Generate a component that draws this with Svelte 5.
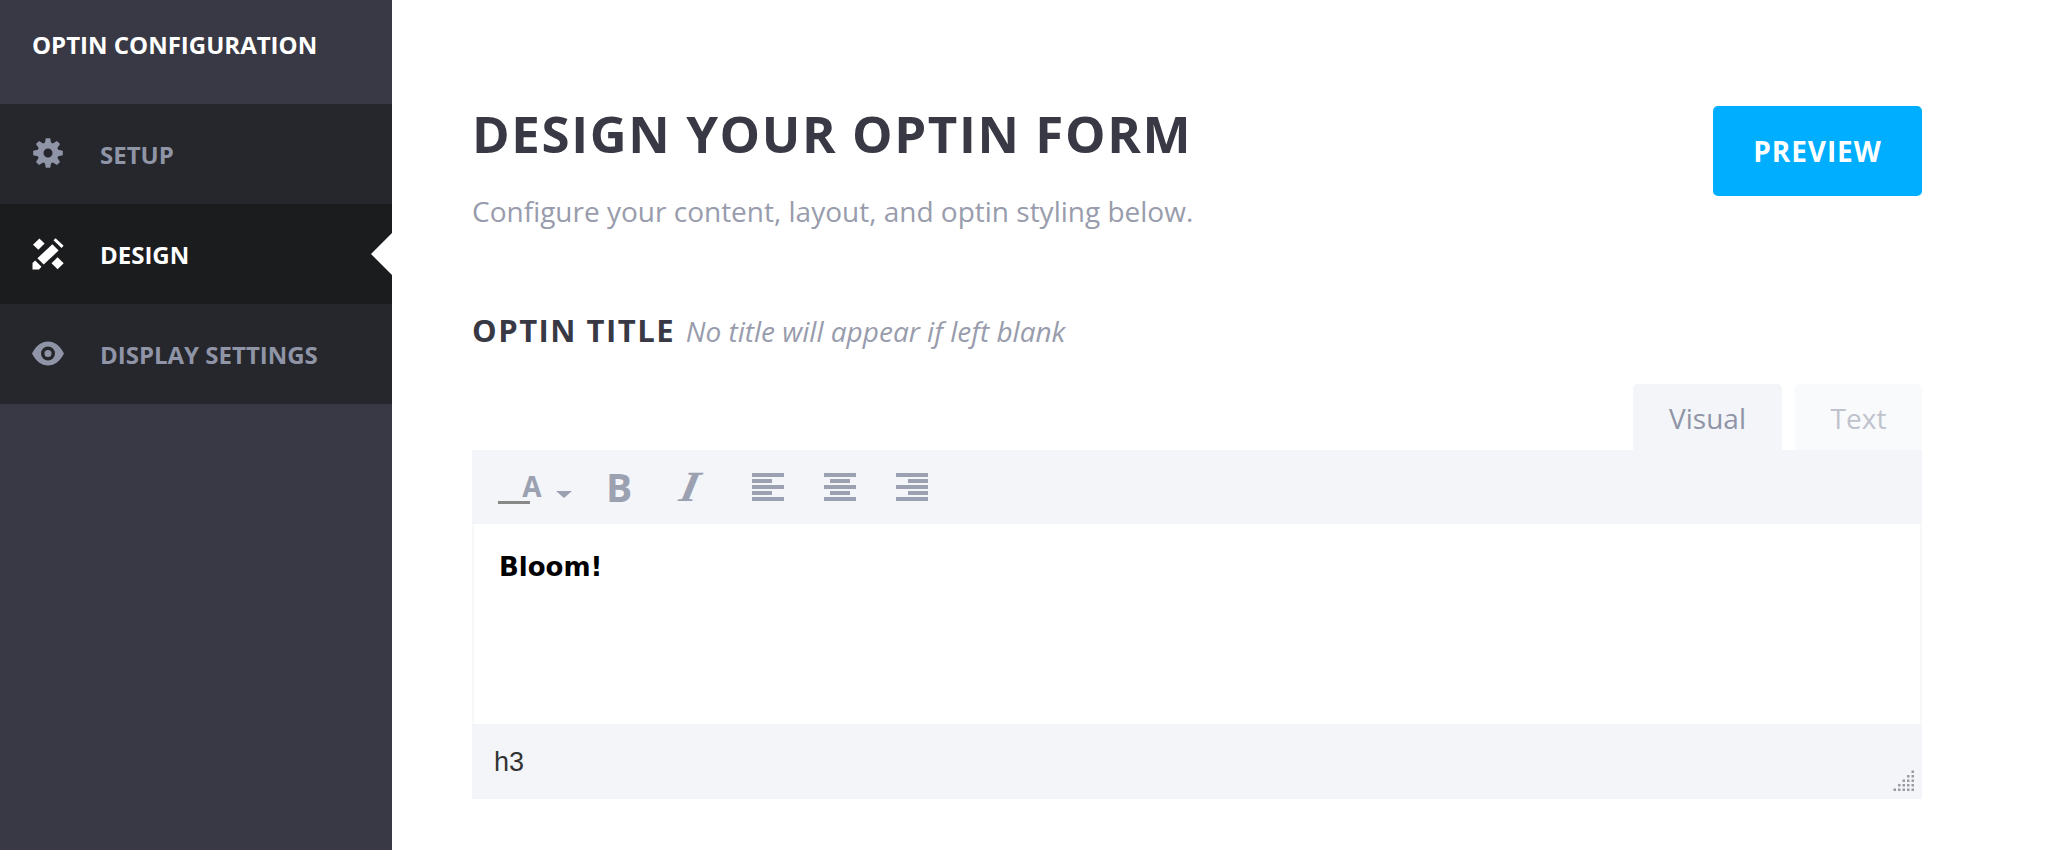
<script>
  const nav = [
    { label: 'SETUP', icon: 'gear' },
    { label: 'DESIGN', icon: 'pencil', active: true },
    { label: 'DISPLAY SETTINGS', icon: 'eye' }
  ];
  const gearPath = (() => {
    const cx = 15, cy = 15, teeth = 8;
    let d = '';
    for (let i = 0; i < teeth; i++) {
      const a = (i / teeth) * Math.PI * 2 - Math.PI / 2;
      const pts = [
        [10.6, a - 0.3], [15, a - 0.15], [15, a + 0.15], [10.6, a + 0.3]
      ];
      for (const [r, t] of pts) {
        d += (d ? 'L' : 'M') + (cx + r * Math.cos(t)).toFixed(2) + ' ' + (cy + r * Math.sin(t)).toFixed(2);
      }
    }
    return d + 'Z';
  })();
  const dots = [];
  for (let row = 0; row < 5; row++) {
    for (let col = 4 - row; col < 5; col++) dots.push([col * 4.5 + 0.5, row * 4.5 + 0.5]);
  }
</script>

<div class="page">
  <aside class="sidebar">
    <div class="side-title">OPTIN CONFIGURATION</div>
    <nav class="nav">
      {#each nav as item}
        <div class="nav-item" class:active={item.active}>
          <span class="nav-icon">
            {#if item.icon === 'gear'}
              <svg width="32" height="32" viewBox="-1 0 32 32"><path fill="currentColor" fill-rule="evenodd" d="{gearPath} M15 10.500a4.500 4.500 0 1 0 0 9a4.500 4.500 0 1 0 0-9Z" /></svg>
            {:else if item.icon === 'pencil'}
              <svg width="32" height="32" viewBox="0 0 32 32" fill="currentColor">
                <path d="M0.5 31.5V25L3.2 22.4L9.5 28.7L7 31.5Z" />
                <path d="M5.4 20.2L20.4 6.3L26.6 12.6L11.7 26.5Z" />
                <path d="M1 6.8L7.4 0.5L12.6 5.6L6.4 11.8Z" />
                <path d="M21.5 2.3L23.6 0.3L31.6 7.8L29.5 10.1Z" />
                <path d="M19.5 25.3L25.6 19.2L31.7 25.2L25.6 31.2Z" />
              </svg>
            {:else}
              <svg width="32" height="32" viewBox="0 0 32 32"><path fill="currentColor" fill-rule="evenodd" d="M0 15.500C4 7.500 9.500 3.500 16 3.500S28 7.500 32 15.500C28 23.500 22.500 27.500 16 27.500S4 23.500 0 15.500ZM16 8.500a7 7 0 1 0 0 14a7 7 0 1 0 0-14ZM16 12a3.500 3.500 0 1 1 0 7a3.500 3.500 0 1 1 0-7Z" /></svg>
            {/if}
          </span>
          <span class="nav-label">{item.label}</span>
        </div>
      {/each}
    </nav>
  </aside>

  <main class="main">
    <header class="head">
      <div>
        <h1>DESIGN YOUR OPTIN FORM</h1>
        <p class="sub">Configure your content, layout, and optin styling below.</p>
      </div>
      <button class="preview">PREVIEW</button>
    </header>

    <h2 class="section"><span class="section-title">OPTIN TITLE</span> <em>No title will appear if left blank</em></h2>

    <div class="tabs">
      <div class="tab on">Visual</div>
      <div class="tab off">Text</div>
    </div>

    <div class="editor">
      <div class="toolbar">
        <span class="tool color">
          <svg width="76" height="48" viewBox="0 -6 76 48">
            <rect x="0" y="32" width="32" height="3" fill="#888" />
            <text x="34" y="28" class="a-glyph" text-anchor="middle">A</text>
            <path d="M58 22H74L66 29Z" fill="#9ba1b0" />
          </svg>
        </span>
        <span class="tool glyph bold">B</span>
        <span class="tool glyph ital">I</span>
        {#each ['l', 'c', 'r'] as a}
          <svg class="align" width="32" height="28" viewBox="0 0 32 28" fill="#9ba1b0">
            <rect x="0" y="0" width="32" height="4" />
            <rect x={a === 'l' ? 0 : a === 'c' ? 6 : 12} y="6" width="20" height="4" />
            <rect x="0" y="12" width="32" height="4" />
            <rect x={a === 'l' ? 0 : a === 'c' ? 6 : 12} y="18" width="20" height="4" />
            <rect x="0" y="24" width="32" height="4" />
          </svg>
        {/each}
      </div>
      <div class="content"><strong>Bloom!</strong></div>
      <div class="status">
        <span>h3</span>
        <svg class="grip" width="22" height="22" viewBox="0 0 22 22" fill="#9a9aa2">
          {#each dots as [x, y]}<rect {x} {y} width="2.500" height="2.500" />{/each}
        </svg>
      </div>
    </div>
  </main>
</div>

<style>
  :global(body) { margin: 0; background: #fff; }
  .page {
    display: flex;
    width: 2054px;
    height: 850px;
    overflow: hidden;
    font-family: "Open Sans", sans-serif;
  }
  .sidebar {
    width: 392px;
    flex: none;
    background: #383944;
  }
  .side-title {
    height: 104px;
    box-sizing: border-box;
    padding: 30px 0 0 32px;
    color: #fff;
    font-size: 24px;
    font-weight: 700;
    line-height: 30px;
  }
  .nav-item {
    position: relative;
    height: 100px;
    display: flex;
    align-items: center;
    padding-left: 32px;
    background: #26272c;
    color: #8f94a6;
    font-size: 24px;
    font-weight: 700;
  }
  .nav-item.active {
    background: #1b1c1e;
    color: #fff;
  }
  .nav-item.active::after {
    content: '';
    position: absolute;
    right: 0;
    top: 29px;
    border-style: solid;
    border-width: 21px 21px 21px 0;
    border-color: transparent #fff transparent transparent;
  }
  .nav-icon {
    width: 32px;
    height: 32px;
    display: block;
    margin-right: 36px;
  }
  .nav-icon svg { display: block; }

  .main {
    width: 1450px;
    margin-left: 80px;
    flex: none;
  }
  .head {
    display: flex;
    justify-content: space-between;
    align-items: flex-start;
    padding-top: 106px;
  }
  h1 {
    margin: -5px 0 0;
    color: #383944;
    font-size: 51px;
    line-height: 64px;
    font-weight: 700;
    letter-spacing: 1.600px;
  }
  .sub {
    margin: 27px 0 0;
    color: #989cac;
    font-size: 28px;
    line-height: 38px;
    font-weight: 400;
  }
  .preview {
    width: 209px;
    height: 90px;
    border: 0;
    border-radius: 5px;
    background: #00aeff;
    color: #fff;
    font-family: inherit;
    font-size: 28px;
    font-weight: 700;
    letter-spacing: 0.900px;
    padding: 0;
  }
  .section {
    margin: 78px 0 0;
    font-size: 31px;
    line-height: 44px;
    font-weight: 700;
    letter-spacing: 1.500px;
    color: #383944;
  }
  .section em {
    font-size: 28px;
    font-weight: 400;
    letter-spacing: 0;
    color: #989cac;
    margin-left: 1px;
  }
  .tabs {
    display: flex;
    justify-content: flex-end;
    gap: 13px;
    margin-top: 31px;
  }
  .tab {
    height: 66px;
    box-sizing: border-box;
    display: flex;
    align-items: center;
    justify-content: center;
    border-radius: 5px 5px 0 0;
    font-size: 28px;
    padding-top: 2px;
  }
  .tab.on { width: 149px; background: #f4f5f8; color: #8f94a6; }
  .tab.off { width: 127px; background: #f9fafc; color: #c0c3cd; }

  .editor {
    border-right: 2px solid #f7f8fa;
    border-left: 2px solid #f7f8fa;
  }
  .toolbar {
    height: 74px;
    background: #f4f5f8;
    margin: 0 -2px;
    display: flex;
    align-items: center;
    padding-left: 26px;
    box-sizing: border-box;
  }
  .tool { display: block; }
  .color { height: 48px; margin-right: 32px; }
  .color svg { display: block; }
  .a-glyph {
    font-family: "Open Sans", sans-serif;
    font-weight: 700;
    font-size: 28px;
    fill: #9ba1b0;
  }
  .glyph {
    width: 24px;
    text-align: center;
    line-height: 40px;
    color: #9ba1b0;
  }
  .bold {
    font-family: "Open Sans", sans-serif;
    font-weight: 700;
    font-size: 39px;
    margin-right: 48px;
  }
  .ital {
    font-family: "Liberation Serif", serif;
    font-style: italic;
    font-weight: 700;
    font-size: 43px;
    margin-right: 50px;
    transform: skewX(-12deg) scaleX(1.1);
  }
  .align { margin-right: 40px; display: block; }
  .content {
    height: 200px;
    box-sizing: border-box;
    padding: 23px 0 0 25px;
    background: #fff;
    color: #000;
    font-family: "DejaVu Sans", sans-serif;
    font-size: 26px;
    line-height: 40px;
  }
  .status {
    position: relative;
    height: 75px;
    background: #f4f5f8;
    margin: 0 -2px;
    box-sizing: border-box;
    padding: 20px 0 0 22px;
    color: #333;
    font-family: "Liberation Sans", sans-serif;
    font-size: 27px;
    line-height: 36px;
  }
  .grip { position: absolute; right: 7px; bottom: 7px; }
</style>
